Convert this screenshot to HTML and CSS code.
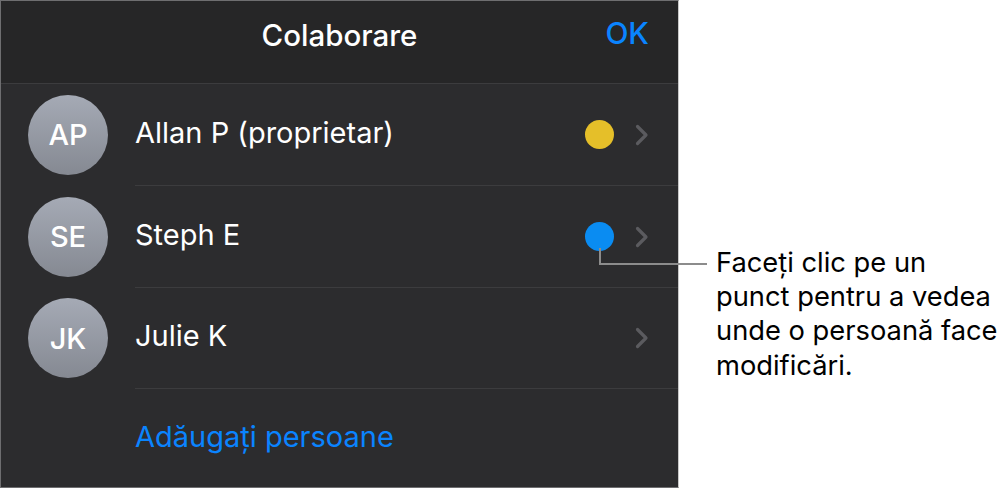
FILE: index.html
```html
<!DOCTYPE html>
<html lang="ro">
<head>
<meta charset="utf-8">
<link rel="stylesheet" href="styles.css">
</head>
<body>
<div class="page">
  <section class="panel">
    <header class="panel-header">
      <div class="title">Colaborare</div>
      <div class="ok">OK</div>
    </header>
    <div class="row">
      <div class="avatar">AP</div>
      <div class="row-main">
        <span class="name">Allan P (proprietar)</span>
        <span class="dot dot-yellow"></span>
        <svg class="chev" width="14" height="22" viewBox="0 0 14 22"><path d="M2.5 2.5 L11 11 L2.5 19.5" fill="none" stroke="#5b5b5f" stroke-width="3.2" stroke-linecap="round" stroke-linejoin="round"/></svg>
      </div>
    </div>
    <div class="row">
      <div class="avatar">SE</div>
      <div class="row-main">
        <span class="name">Steph E</span>
        <span class="dot dot-blue"></span>
        <svg class="chev" width="14" height="22" viewBox="0 0 14 22"><path d="M2.5 2.5 L11 11 L2.5 19.5" fill="none" stroke="#5b5b5f" stroke-width="3.2" stroke-linecap="round" stroke-linejoin="round"/></svg>
      </div>
    </div>
    <div class="row row-short">
      <div class="avatar">JK</div>
      <div class="row-main">
        <span class="name">Julie K</span>
        <svg class="chev" width="14" height="22" viewBox="0 0 14 22"><path d="M2.5 2.5 L11 11 L2.5 19.5" fill="none" stroke="#5b5b5f" stroke-width="3.2" stroke-linecap="round" stroke-linejoin="round"/></svg>
      </div>
    </div>
    <div class="add-row">
      <span class="add">Adăugați persoane</span>
    </div>
  </section>
  <aside class="callout">
    <p class="callout-text">Faceți clic pe un<br>punct pentru a vedea<br>unde o persoană face<br>modificări.</p>
  </aside>
  <svg class="connector" width="120" height="24" viewBox="0 0 120 24"><path d="M1 0 V16 H108" fill="none" stroke="#8c8c8c" stroke-width="2"/></svg>
</div>
</body>
</html>
```

FILE: styles.css
```css
html, body {
  margin: 0;
  padding: 0;
  background: #ffffff;
}
body {
  width: 1008px;
  height: 489px;
  overflow: hidden;
  font-family: "Inter", "Noto Sans", sans-serif;
}
.page {
  position: relative;
  display: flex;
  align-items: flex-start;
  height: 489px;
}
.panel {
  box-sizing: border-box;
  width: 679px;
  height: 488px;
  border: 1px solid #6e6e70;
  border-right-color: #c8c8c8;
  background: #2c2c2e;
  display: flex;
  flex-direction: column;
}
.panel-header {
  height: 82px;
  background: #262627;
  border-bottom: 1px solid #3c3c3e;
  display: flex;
  align-items: center;
  justify-content: center;
  position: relative;
  flex: none;
}
.title {
  color: #ffffff;
  font-size: 29.5px;
  font-weight: 500;
  margin-top: -15px;
}
.ok {
  position: absolute;
  right: 29px;
  top: 14px;
  color: #0a84ff;
  font-size: 30px;
  font-weight: 500;
}
.row {
  height: 102px;
  display: flex;
  align-items: center;
  padding-left: 27px;
  flex: none;
}
.row-short {
  height: 101px;
}
.avatar {
  width: 80px;
  height: 80px;
  border-radius: 50%;
  background: linear-gradient(#a5aab5, #858992);
  color: #ffffff;
  font-size: 29px;
  font-weight: 500;
  display: flex;
  align-items: center;
  justify-content: center;
  flex: none;
  margin-bottom: 1px;
}
.row-main {
  flex: 1;
  align-self: stretch;
  margin-left: 27px;
  border-bottom: 1px solid #3c3c3e;
  display: flex;
  align-items: center;
  padding-right: 29px;
}
.name {
  flex: 1;
  color: #ffffff;
  font-size: 29px;
  font-weight: 400;
  padding-bottom: 5px;
}
.dot {
  width: 29px;
  height: 29px;
  border-radius: 50%;
  margin-right: 21px;
}
.dot-yellow {
  background: #e5bf29;
}
.dot-blue {
  background: #0a8cf2;
}
.chev {
  display: block;
}
.add-row {
  flex: 1;
  display: flex;
  align-items: center;
  padding-left: 134px;
  padding-bottom: 4px;
}
.add {
  color: #0a84ff;
  font-size: 29px;
}
.callout {
  padding-top: 246px;
  padding-left: 37px;
}
.callout-text {
  margin: 0;
  color: #000000;
  font-size: 27.3px;
  line-height: 34.2px;
}
.connector {
  position: absolute;
  left: 599px;
  top: 248px;
}
```
